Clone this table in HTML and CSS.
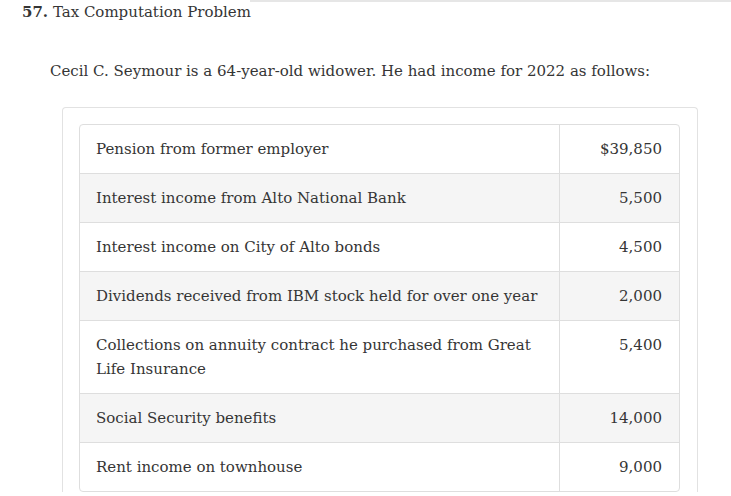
FILE: index.html
```html
<!DOCTYPE html>
<html>
<head>
<meta charset="utf-8">
<link rel="stylesheet" href="styles.css">
</head>
<body>
<div class="topline"></div>
<h2 class="title"><b>57.</b> Tax Computation Problem</h2>
<p class="intro">Cecil C. Seymour is a 64-year-old widower. He had income for 2022 as follows:</p>
<div class="card">
  <table class="tbl">
    <tr><td class="lbl">Pension from former employer</td><td class="amt">$39,850</td></tr>
    <tr><td class="lbl">Interest income from Alto National Bank</td><td class="amt">5,500</td></tr>
    <tr><td class="lbl">Interest income on City of Alto bonds</td><td class="amt">4,500</td></tr>
    <tr><td class="lbl">Dividends received from IBM stock held for over one year</td><td class="amt">2,000</td></tr>
    <tr><td class="lbl">Collections on annuity contract he purchased from Great Life Insurance</td><td class="amt">5,400</td></tr>
    <tr><td class="lbl">Social Security benefits</td><td class="amt">14,000</td></tr>
    <tr><td class="lbl">Rent income on townhouse</td><td class="amt">9,000</td></tr>
  </table>
</div>
</body>
</html>
```
FILE: styles.css
```css
html, body { margin: 0; padding: 0; background: #fff; }
body {
  font-family: "DejaVu Serif", "Liberation Serif", serif;
  color: #353535;
  font-size: 15px;
  overflow: hidden;
}
.topline { height: 2px; background: #e6e6e6; margin-left: 250px; }
.title {
  margin: 0;
  padding: 0 0 0 22px;
  font-size: 15px;
  font-weight: normal;
  line-height: 20px;
}
.title b { font-weight: bold; }
.intro {
  margin: 37px 0 0 50px;
  line-height: 24px;
}
.card {
  margin: 24px 0 0 62px;
  width: 601px;
  padding: 16px 17px 0 16px;
  border: 1px solid #e2e2e2;
  border-bottom: none;
  border-radius: 4px 4px 0 0;
}
.tbl {
  width: 601px;
  border-collapse: separate;
  border-spacing: 0;
  border: 1px solid #dedede;
  border-radius: 4px;
  overflow: hidden;
}
.tbl td {
  padding: 12px 16px;
  line-height: 24px;
  vertical-align: top;
  border-top: 1px solid #dedede;
}
.tbl tr:first-child td { border-top: none; }
.tbl tr:nth-child(even) td { background: #f5f5f5; }
.lbl { width: 447px; border-right: 1px solid #dedede; }
.amt { text-align: right; padding-right: 17px !important; }
```
